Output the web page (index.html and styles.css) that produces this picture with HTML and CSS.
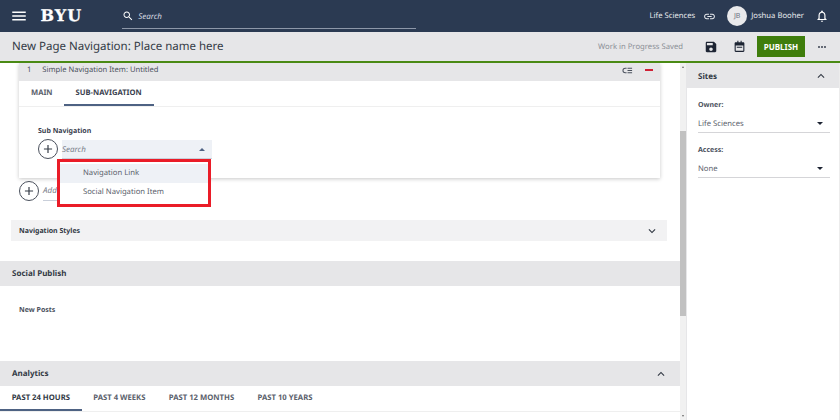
FILE: index.html
```html
<!DOCTYPE html>
<html lang="en">
<head>
<meta charset="utf-8">
<title>New Page Navigation</title>
<link rel="stylesheet" href="styles.css">
</head>
<body>
<header class="topbar">
  <svg class="icon menu-icon" viewBox="0 0 24 24"><path d="M3 18h18v-2H3v2zm0-5h18v-2H3v2zm0-7v2h18V6H3z"/></svg>
  <span class="logo">BYU</span>
  <div class="global-search">
    <svg class="icon search-icon" viewBox="0 0 24 24"><path d="M15.5 14h-.79l-.28-.27C15.41 12.59 16 11.11 16 9.5 16 5.91 13.09 3 9.5 3S3 5.91 3 9.5 5.91 16 9.5 16c1.61 0 3.09-.59 4.23-1.57l.27.28v.79l5 4.99L20.49 19l-4.99-5zm-6 0C7.01 14 5 11.99 5 9.5S7.01 5 9.5 5 14 7.01 14 9.5 11.99 14 9.5 14z"/></svg>
    <span>Search</span>
  </div>
  <div class="top-right">
    <span class="org">Life Sciences</span>
    <svg class="icon link-icon" viewBox="0 0 24 24"><path d="M3.9 12c0-1.71 1.39-3.1 3.1-3.1h4V7H7c-2.76 0-5 2.24-5 5s2.24 5 5 5h4v-1.9H7c-1.71 0-3.1-1.39-3.1-3.1zM8 13h8v-2H8v2zm9-6h-4v1.9h4c1.71 0 3.1 1.39 3.1 3.1s-1.39 3.1-3.1 3.1h-4V17h4c2.76 0 5-2.24 5-5s-2.24-5-5-5z"/></svg>
    <span class="avatar">JB</span>
    <span class="user">Joshua Booher</span>
    <svg class="icon bell-icon" viewBox="0 0 24 24"><path d="M12 22c1.1 0 2-.9 2-2h-4c0 1.1.89 2 2 2zm6-6v-5c0-3.07-1.64-5.64-4.5-6.32V4c0-.83-.67-1.5-1.5-1.5s-1.5.67-1.5 1.5v.68C7.63 5.36 6 7.92 6 11v5l-2 2v1h16v-1l-2-2zm-2 1H8v-6c0-2.48 1.51-4.5 4-4.5s4 2.02 4 4.5v6z"/></svg>
  </div>
</header>

<div class="subbar">
  <h1 class="page-title">New Page Navigation: Place name here</h1>
  <div class="sub-actions">
    <span class="saved">Work in Progress Saved</span>
    <svg class="icon save-icon" viewBox="0 0 24 24"><path d="M17 3H5c-1.11 0-2 .9-2 2v14c0 1.1.89 2 2 2h14c1.1 0 2-.9 2-2V7l-4-4zm-5 16c-1.66 0-3-1.34-3-3s1.34-3 3-3 3 1.34 3 3-1.34 3-3 3zm3-10H5V5h10v4z"/></svg>
    <svg class="icon cal-icon" viewBox="0 0 24 24"><path d="M8 1.5h2V4h4V1.5h2V4h3c1.1 0 2 .9 2 2v14c0 1.1-.9 2-2 2H5c-1.1 0-2-.9-2-2V6c0-1.1.9-2 2-2h3V1.5zM5 10v10h14V10H5zm2 2.5h10v2H7v-2z"/></svg>
    <button class="publish">PUBLISH</button>
    <svg class="icon more-icon" viewBox="0 0 24 24"><path d="M6 10a2 2 0 1 0 0 4 2 2 0 0 0 0-4zm12 0a2 2 0 1 0 0 4 2 2 0 0 0 0-4zm-6 0a2 2 0 1 0 0 4 2 2 0 0 0 0-4z"/></svg>
  </div>
</div>

<div class="workspace">
  <main class="content">
    <section class="card">
      <div class="card-head">
        <span class="card-num">1</span>
        <span class="card-title">Simple Navigation Item: Untitled</span>
        <svg class="icon reorder-icon" viewBox="0 0 24 24"><path d="M10 6H7a6 6 0 0 0 0 12h3v-2.2H7a3.8 3.8 0 0 1 0-7.6h3V6zM12 6h10v2.2H12V6zm0 4.9h10v2.2H12v-2.2zm0 4.9h10V18H12v-2.2z"/></svg>
        <span class="remove"></span>
      </div>
      <nav class="card-tabs">
        <span class="card-tab">MAIN</span>
        <span class="card-tab active">SUB-NAVIGATION</span>
      </nav>
      <div class="card-body">
        <div class="field-label">Sub Navigation</div>
        <div class="picker">
          <span class="plus"><svg viewBox="0 0 24 24"><path d="M11 5h2v6h6v2h-6v6h-2v-6H5v-2h6V5z"/></svg></span>
          <div class="combo">
            <span>Search</span>
            <i class="caret-up"></i>
            <ul class="dropdown">
              <li class="hover">Navigation Link</li>
              <li>Social Navigation Item</li>
            </ul>
          </div>
        </div>
      </div>
    </section>

    <div class="add-row">
      <span class="plus"><svg viewBox="0 0 24 24"><path d="M11 5h2v6h6v2h-6v6h-2v-6H5v-2h6V5z"/></svg></span>
      <span class="add-input">Add</span>
    </div>

    <div class="styles-bar">
      <span>Navigation Styles</span>
      <svg class="icon chev" viewBox="0 0 24 24"><path d="M7.41 8.59 12 13.17l4.59-4.58L18 10l-6 6-6-6z"/></svg>
    </div>

    <div class="section-bar social">Social Publish</div>
    <div class="new-posts">New Posts</div>

    <div class="section-bar">
      <span>Analytics</span>
      <svg class="icon chev" viewBox="0 0 24 24"><path d="M7.41 15.41 12 10.83l4.59 4.58L18 14l-6-6-6 6z"/></svg>
    </div>
    <nav class="range-tabs">
      <span class="range active">PAST 24 HOURS</span>
      <span class="range">PAST 4 WEEKS</span>
      <span class="range">PAST 12 MONTHS</span>
      <span class="range">PAST 10 YEARS</span>
    </nav>
  </main>

  <div class="scrollbar">
    <i class="arrow-up"></i>
    <div class="thumb"></div>
    <i class="arrow-down"></i>
  </div>

  <aside class="sidebar">
    <div class="side-head">
      <span>Sites</span>
      <svg class="icon chev" viewBox="0 0 24 24"><path d="M7.41 15.41 12 10.83l4.59 4.58L18 14l-6-6-6 6z"/></svg>
    </div>
    <div class="side-body">
      <div class="side-label">Owner:</div>
      <div class="select"><span>Life Sciences</span><i class="caret-down"></i></div>
      <div class="side-label">Access:</div>
      <div class="select"><span>None</span><i class="caret-down"></i></div>
    </div>
  </aside>
</div>
</body>
</html>
```
FILE: styles.css
```css
* { box-sizing: border-box; }
html, body { margin: 0; height: 100%; }
body {
  width: 840px;
  height: 420px;
  overflow: hidden;
  background: #fff;
  font-family: "Noto Sans", sans-serif;
  color: #333a45;
  display: flex;
  flex-direction: column;
  text-rendering: geometricPrecision;
}
.icon { display: block; flex: none; fill: currentColor; }

/* top bar */
.topbar {
  height: 32px;
  flex: none;
  background: #2b3a52;
  color: #fff;
  display: flex;
  align-items: center;
  padding-left: 10px;
}
.menu-icon { width: 18px; height: 18px; }
.logo {
  margin-left: 12.5px;
  font-family: "DejaVu Serif", serif;
  font-weight: 700;
  font-size: 16px;
  letter-spacing: 1px;
  line-height: 1;
  -webkit-text-stroke: .3px #fff;
}
.global-search {
  margin-left: 40px;
  width: 294px;
  height: 26px;
  display: flex;
  align-items: center;
  gap: 4px;
  padding-top: 1px;
  border-bottom: 1px solid #8d97a8;
  font-size: 8px;
  font-style: italic;
  color: #d5d9e0;
}
.search-icon { width: 12px; height: 12px; color: #fff; }
.top-right {
  margin-left: auto;
  display: flex;
  align-items: center;
  font-size: 7.7px;
  padding-right: 11px;
  color: #e8eaee;
}
.link-icon { width: 13px; height: 13px; margin-left: 8px; }
.avatar {
  width: 20px;
  height: 20px;
  margin-left: 11px;
  border-radius: 50%;
  background: #e9e9eb;
  color: #6a7280;
  font-size: 7px;
  display: flex;
  align-items: center;
  justify-content: center;
}
.user { margin-left: 4px; }
.bell-icon { width: 14px; height: 14px; margin-left: 11px; color: #fff; }

/* title bar */
.subbar {
  height: 31px;
  flex: none;
  background: #e6e6e8;
  border-bottom: 2px solid #4a8a14;
  display: flex;
  align-items: center;
  padding: 0 12px;
}
.page-title {
  margin: 0;
  font-size: 11.5px;
  font-weight: 400;
  color: #333a45;
}
.sub-actions { margin-left: auto; display: flex; align-items: center; }
.saved { font-size: 7.7px; color: #8b8f96; margin-right: 1px; }
.save-icon { width: 14px; height: 14px; margin-left: 20px; color: #1d2433; }
.cal-icon { width: 13px; height: 13px; margin-left: 15px; color: #1d2433; }
.publish {
  margin-left: 11px;
  width: 48px;
  height: 21px;
  padding: 0;
  border: 0;
  background: #3f7d0c;
  color: #fff;
  font-family: inherit;
  font-weight: 700;
  font-size: 8px;
}
.more-icon { width: 12px; height: 12px; margin-left: 11px; color: #3b4250; }

/* workspace */
.workspace { flex: 1; min-height: 0; display: flex; }
.content { width: 680px; flex: none; overflow: hidden; }

.card {
  margin: 0 20px 0 19px;
  background: #fff;
  box-shadow: 0 1px 4px rgba(0, 0, 0, .22);
}
.card-head {
  height: 18px;
  background: #e6e6e8;
  display: flex;
  align-items: center;
  padding: 0 7px 4px 8px;
  font-size: 7.6px;
  color: #4a505c;
}
.card-title { margin-left: 11px; }
.reorder-icon { width: 11px; height: 11px; margin-left: auto; color: #4a505c; margin-right: 1.5px; }
.remove { width: 8px; height: 2px; margin-left: 11px; background: #d02035; }
.card-tabs {
  height: 26px;
  display: flex;
  border-bottom: 1px solid #efefef;
}
.card-tab {
  padding: 0 12px;
  margin-right: -1px;
  line-height: 25px;
  font-size: 7.6px;
  font-weight: 700;
  color: #5b616c;
}
.card-tab.active {
  height: 25px;
  color: #3b4250;
  border-bottom: 2px solid #4e6283;
}
.card-body { height: 71px; padding: 19px 0 0 19px; }
.field-label { font-size: 7px; font-weight: 700; line-height: 12px; color: #3b4250; }
.picker { display: flex; align-items: center; margin-top: 1px; }
.plus {
  width: 20px;
  height: 20px;
  flex: none;
  border: 1px solid #4a505c;
  border-radius: 50%;
  background: #fff;
  display: flex;
  align-items: center;
  justify-content: center;
  color: #333a45;
}
.plus svg { width: 14px; height: 14px; fill: currentColor; }
.combo {
  position: relative;
  width: 150px;
  height: 19px;
  margin-left: 4px;
  padding-top: 1px;
  background: #eef1f6;
  border-bottom: 1px solid #c9cfda;
  display: flex;
  align-items: center;
  justify-content: space-between;
  font-size: 8px;
  font-style: italic;
  color: #7a808a;
}
.caret-up {
  width: 0;
  height: 0;
  margin-right: 7px;
  border: 3px solid transparent;
  border-top: 0;
  border-bottom: 3px solid #4e6283;
}
.dropdown {
  position: absolute;
  left: -5px;
  top: 19px;
  width: 154px;
  height: 48px;
  margin: 0;
  padding: 2px 0 0;
  list-style: none;
  background: #fff;
  border: 3px solid #ea1c28;
  font-size: 7.7px;
  font-style: normal;
  color: #5b616c;
  z-index: 2;
}
.dropdown li { height: 19px; line-height: 19px; padding-left: 23px; }
.dropdown li.hover { background: #eef1f6; }

.add-row {
  display: flex;
  align-items: center;
  margin: 3px 0 0 19px;
  height: 20px;
}
.add-input {
  width: 20px;
  margin-left: 4px;
  border-bottom: 1px solid #c9cfda;
  height: 19px;
  line-height: 18px;
  font-size: 8px;
  font-style: italic;
  color: #7a808a;
}
.styles-bar {
  height: 21px;
  margin: 19px 13px 0 11px;
  padding: 1px 8px 0;
  background: #f2f2f3;
  display: flex;
  align-items: center;
  justify-content: space-between;
  font-size: 7px;
  font-weight: 700;
  color: #333a45;
}
.chev { width: 14px; height: 14px; color: #333a45; }
.section-bar {
  height: 25px;
  padding: 0 12px;
  background: #e6e6e8;
  display: flex;
  align-items: center;
  justify-content: space-between;
  font-size: 8px;
  font-weight: 700;
  color: #333a45;
}
.section-bar.social { margin-top: 20px; }
.new-posts {
  height: 75px;
  padding: 19px 0 0 19px;
  font-size: 7px;
  line-height: 11px;
  font-weight: 700;
  color: #4a505c;
}
.range-tabs { height: 26px; display: flex; border-bottom: 1px solid #efefef; }
.range {
  height: 25px;
  padding: 0 11.7px;
  line-height: 25px;
  font-size: 7.7px;
  font-weight: 700;
  color: #5b616c;
}
.range.active {
  color: #333a45;
  border-bottom: 2px solid #4e6283;
}

/* scrollbar */
.scrollbar {
  position: relative;
  width: 6px;
  flex: none;
  background: #f1f1f1;
}
.thumb {
  margin-top: 68px;
  height: 185px;
  background: #c1c1c1;
}
.arrow-up, .arrow-down {
  position: absolute;
  left: 1.5px;
  width: 0;
  height: 0;
  border: 1.5px solid transparent;
}
.arrow-up { top: 3px; border-top: 0; border-bottom: 2px solid #6a6a6a; }
.arrow-down { bottom: 3px; border-bottom: 0; border-top: 2px solid #6a6a6a; }

/* sidebar */
.sidebar {
  flex: 1;
  border-left: 1px solid #e6e6e8;
  border-right: 1px solid #ececec;
}
.side-head {
  height: 25px;
  padding: 1px 11px 0;
  background: #e6e6e8;
  display: flex;
  align-items: center;
  justify-content: space-between;
  font-size: 8px;
  font-weight: 700;
  color: #333a45;
}
.side-body { padding: 12px 9px 0 11px; }
.side-label { font-size: 7px; font-weight: 700; line-height: 11px; color: #4a505c; }
.select {
  height: 22px;
  margin-bottom: 12px;
  padding-top: 4px;
  border-bottom: 1px solid #d5d5d8;
  display: flex;
  align-items: center;
  justify-content: space-between;
  font-size: 7.7px;
  color: #5b616c;
}
.caret-down {
  width: 0;
  height: 0;
  margin-right: 7px;
  border: 3px solid transparent;
  border-bottom: 0;
  border-top: 3px solid #1d2433;
}
```
